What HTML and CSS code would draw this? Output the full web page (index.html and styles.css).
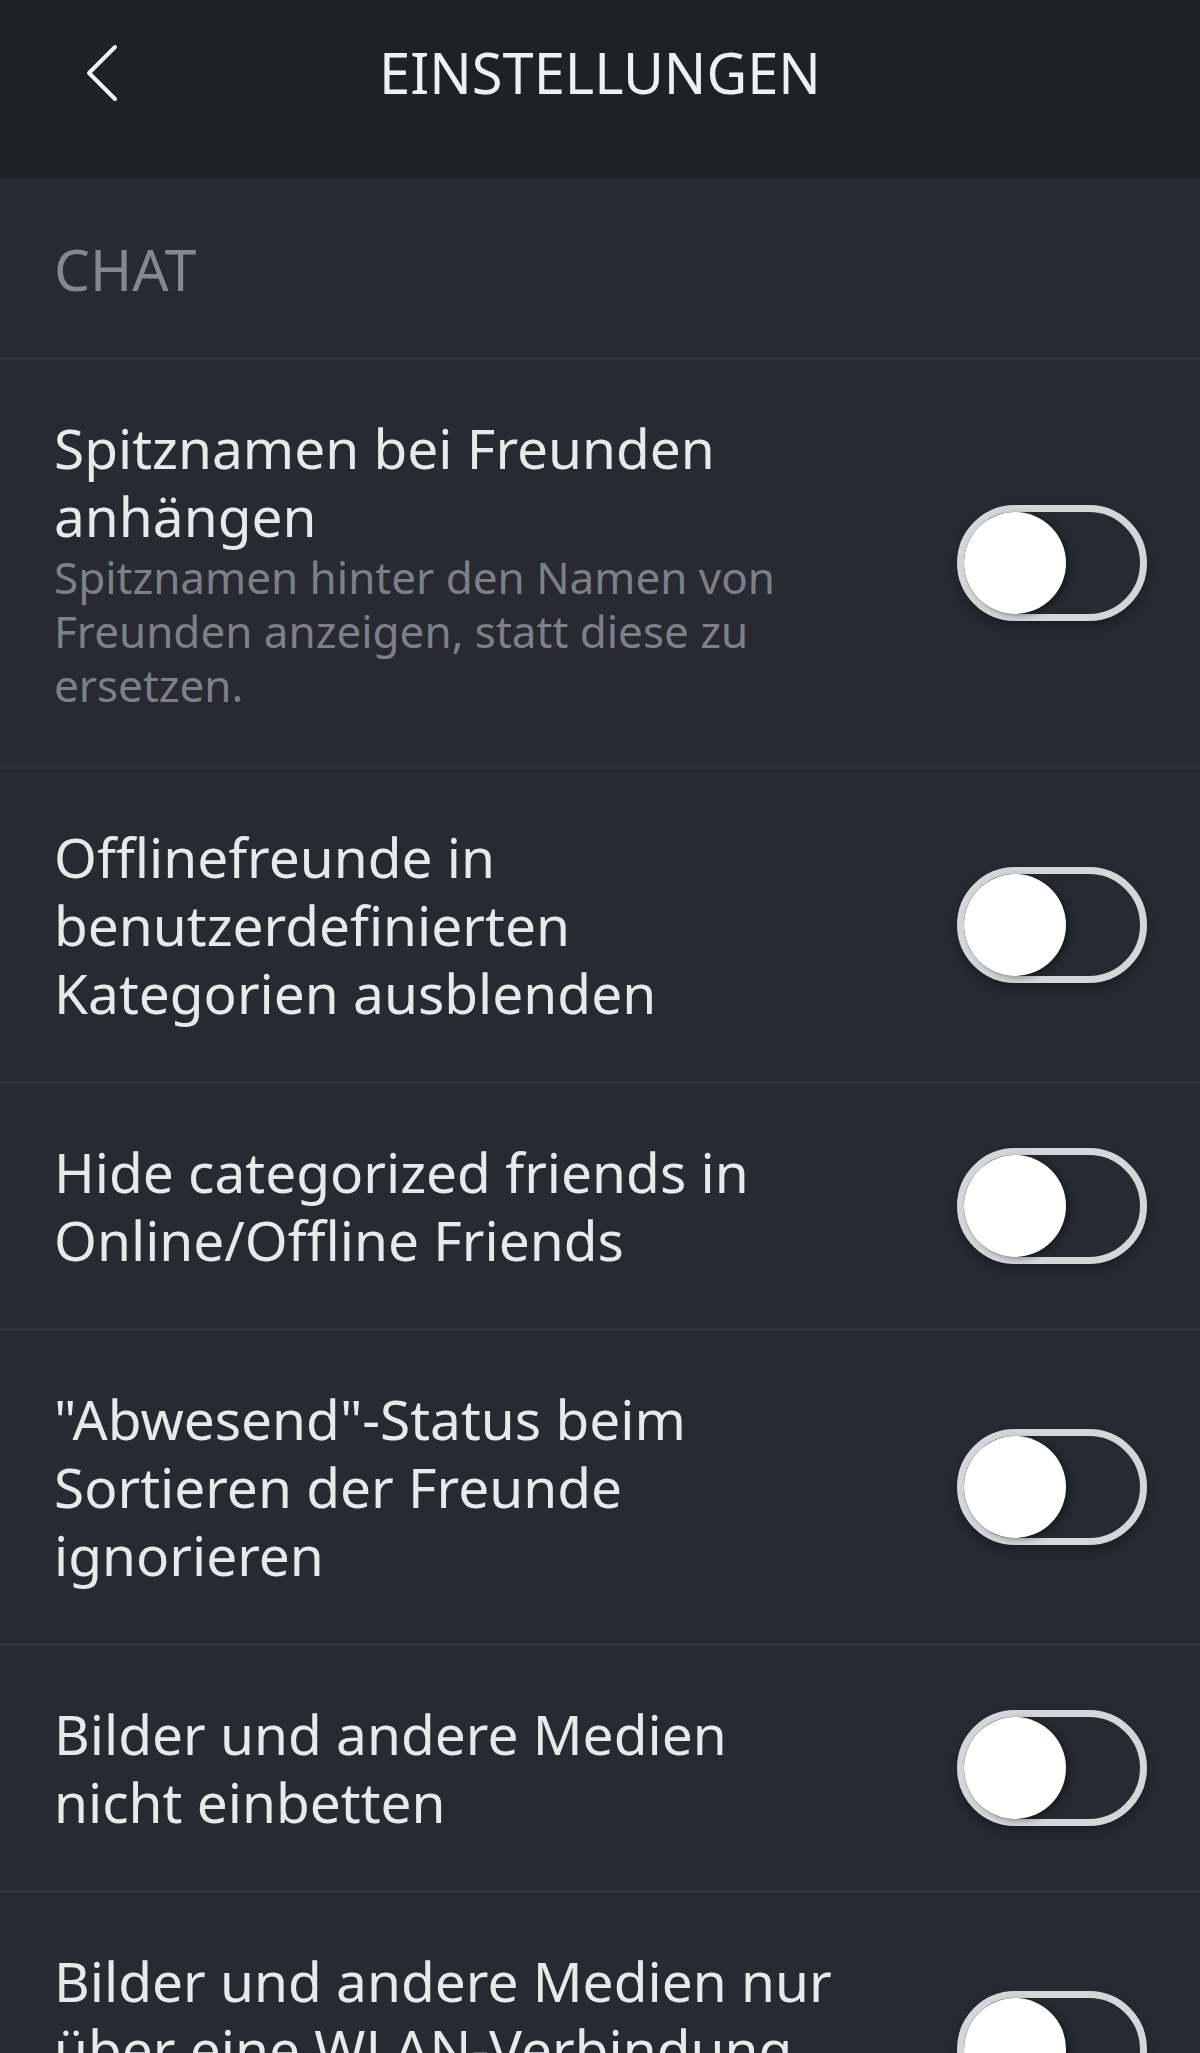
FILE: index.html
```html
<!DOCTYPE html>
<html lang="de">
<head>
  <meta charset="UTF-8" />
  <meta name="viewport" content="width=device-width, initial-scale=1" />
  <title>Einstellungen</title>
  <link rel="stylesheet" href="styles.css">
</head>
<body>
  <header class="topbar">
    <div class="topbar-row">
      <button type="button" class="back" aria-label="Zurück">
        <svg width="32" height="58" viewBox="0 0 32 58">
          <polyline points="29,3 3,29 29,55" fill="none" stroke="#f2f3f5" stroke-width="4" stroke-linecap="round" stroke-linejoin="round" />
        </svg>
      </button>
      <h1>EINSTELLUNGEN</h1>
    </div>
  </header>

  <section class="settings">
    <h2 class="section-title">CHAT</h2>

    <div class="setting">
      <div class="setting-text">
        <div class="setting-label">Spitznamen bei Freunden anhängen</div>
        <div class="setting-desc">Spitznamen hinter den Namen von Freunden anzeigen, statt diese zu ersetzen.</div>
      </div>
      <div class="toggle"><span class="knob"></span></div>
    </div>

    <div class="setting">
      <div class="setting-text">
        <div class="setting-label">Offlinefreunde in benutzerdefinierten Kategorien ausblenden</div>
      </div>
      <div class="toggle"><span class="knob"></span></div>
    </div>

    <div class="setting">
      <div class="setting-text">
        <div class="setting-label">Hide categorized friends in Online/Offline Friends</div>
      </div>
      <div class="toggle"><span class="knob"></span></div>
    </div>

    <div class="setting">
      <div class="setting-text">
        <div class="setting-label">"Abwesend"-Status beim Sortieren der Freunde ignorieren</div>
      </div>
      <div class="toggle"><span class="knob"></span></div>
    </div>

    <div class="setting">
      <div class="setting-text">
        <div class="setting-label">Bilder und andere Medien nicht einbetten</div>
      </div>
      <div class="toggle"><span class="knob"></span></div>
    </div>

    <div class="setting">
      <div class="setting-text">
        <div class="setting-label">Bilder und andere Medien nur über eine WLAN-Verbindung laden</div>
      </div>
      <div class="toggle"><span class="knob"></span></div>
    </div>
  </section>
</body>
</html>
```

FILE: styles.css
```css
* {
  margin: 0;
  padding: 0;
  box-sizing: border-box;
}
body {
  height: 2053px;
  overflow: hidden;
  background: #272a33;
  font-family: 'Noto Sans', 'Open Sans', sans-serif;
  color: #e8e9eb;
}
.topbar {
  height: 178px;
  background: #1f2126;
  padding-top: 38px;
}
.topbar-row {
  position: relative;
  height: 68px;
  display: flex;
  align-items: center;
  justify-content: center;
}
.back {
  position: absolute;
  left: 86px;
  top: 6px;
  background: none;
  border: none;
  display: flex;
}
h1 {
  font-size: 56px;
  font-weight: 400;
  line-height: 68px;
  color: #eef0f2;
}
.section-title {
  font-size: 57px;
  font-weight: 400;
  line-height: 68px;
  color: #858890;
  padding: 57px 54px 54px;
}
.setting {
  display: flex;
  align-items: center;
  gap: 113px;
  border-top: 3px solid #2f323b;
  padding: 54px 53px 54px 54px;
}
.setting-text {
  flex: 1;
}
.setting-label {
  font-size: 55px;
  line-height: 68px;
}
.setting-desc {
  font-size: 44px;
  line-height: 54px;
  color: #7d8087;
}
.toggle {
  flex: none;
  width: 190px;
  height: 116px;
  border: 7px solid #d4d6d9;
  border-radius: 58px;
  display: flex;
  align-items: center;
  box-shadow: 0 5px 10px rgba(0, 0, 0, 0.3);
}
.knob {
  width: 102px;
  height: 102px;
  border-radius: 50%;
  background: #fff;
  box-shadow: 4px 2px 6px rgba(0, 0, 0, 0.35);
}
```
